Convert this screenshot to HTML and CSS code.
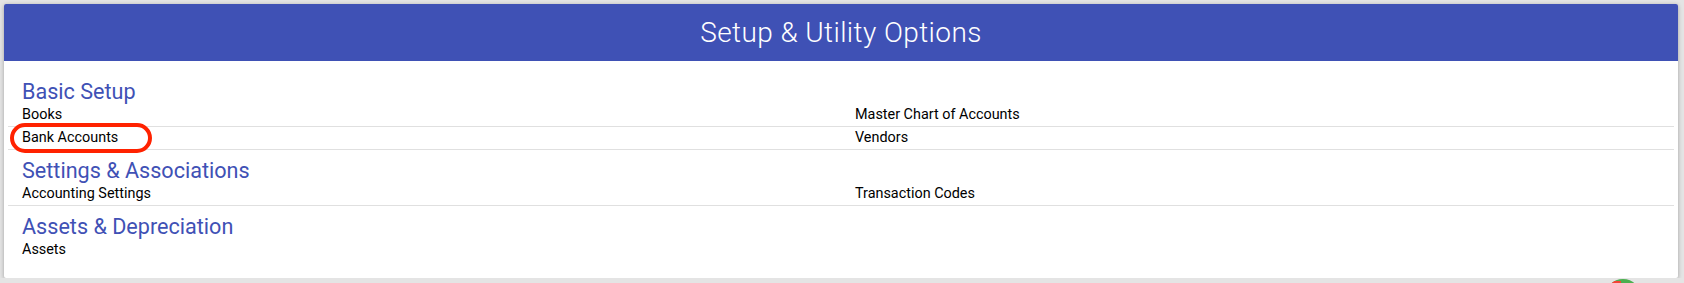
FILE: index.html
```html
<!DOCTYPE html>
<html>
<head>
<title>Setup &amp; Utility Options</title>
<link rel="stylesheet" href="styles.css">
</head>
<body>
<div class="card">
  <div class="card-header">Setup &amp; Utility Options</div>
  <div class="card-body">
    <div class="section">
      <h2>Basic Setup</h2>
      <div class="row">
        <a class="cell" href="#">Books</a>
        <a class="cell" href="#">Master Chart of Accounts</a>
      </div>
      <div class="row">
        <a class="cell marked" href="#">Bank Accounts</a>
        <a class="cell" href="#">Vendors</a>
      </div>
    </div>
    <div class="section">
      <h2>Settings &amp; Associations</h2>
      <div class="row">
        <a class="cell" href="#">Accounting Settings</a>
        <a class="cell" href="#">Transaction Codes</a>
      </div>
    </div>
    <div class="section">
      <h2>Assets &amp; Depreciation</h2>
      <div class="row last">
        <a class="cell" href="#">Assets</a>
        <span class="cell"></span>
      </div>
    </div>
  </div>
</div>
<div class="fab"><span class="fab-badge"></span></div>
</body>
</html>
```

FILE: styles.css
```css
body {
  margin: 0;
  background-color: #e4e4e4;
  font-family: Roboto, "Liberation Sans", sans-serif;
  overflow: hidden;
}

.card {
  margin: 4px 6px 0 4px;
  height: 274px;
  background-color: #fff;
  border-radius: 2px;
  box-shadow: 0 1px 4px rgba(0, 0, 0, 0.3);
  overflow: hidden;
}

.card-header {
  height: 57px;
  display: flex;
  justify-content: center;
  align-items: center;
  background-color: #3f51b5;
  color: #fff;
  font-size: 28px;
  font-weight: 300;
  letter-spacing: 0.4px;
}

.card-body {
  padding: 10px 4px 0 4px;
}

.section h2 {
  margin: 0;
  padding: 9px 14px 0 14px;
  font-size: 21.6px;
  line-height: 24px;
  font-weight: 400;
  color: #3f51b5;
}

.row {
  display: flex;
  border-bottom: 1px solid #e0e0e0;
  padding: 1px 0;
}

.row.last {
  border-bottom: none;
}

.cell {
  flex: 1;
  padding-left: 14px;
  font-size: 14.4px;
  line-height: 20px;
  color: #000;
  text-decoration: none;
}

.marked {
  position: relative;
}

.marked::before {
  content: "";
  position: absolute;
  left: 2px;
  top: -5px;
  box-sizing: border-box;
  width: 142px;
  height: 30px;
  border: 4px solid #ff2200;
  border-radius: 15px;
}

.fab {
  position: fixed;
  left: 1605px;
  top: 279px;
  width: 36px;
  height: 36px;
  border-radius: 50%;
  background-color: #4caf50;
  overflow: hidden;
}

.fab-badge {
  display: block;
  width: 16px;
  height: 10px;
  margin-top: 2px;
  background-color: #f44336;
}
```
